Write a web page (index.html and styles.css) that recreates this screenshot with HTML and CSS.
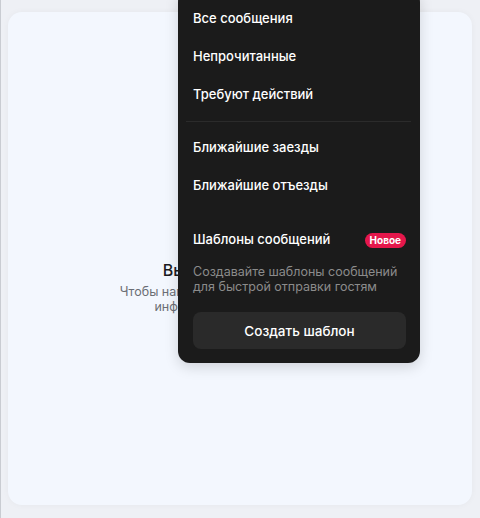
FILE: index.html
```html
<!DOCTYPE html>
<html lang="ru">
<head>
    <meta charset="UTF-8">
    <meta name="viewport" content="width=device-width, initial-scale=1.0">
    <title>Сообщения</title>
    <link rel="stylesheet" href="styles.css">
</head>
<body>
    <div class="page">
        <div class="card">
            <div class="empty">
                <h2 class="empty-title">Выберите разговор</h2>
                <p class="empty-text">Чтобы написать гостю или посмотреть<br>информацию о проживании</p>
            </div>
        </div>

        <!-- Выпадающее меню фильтров -->
        <div class="menu">
            <div class="menu-item">Все сообщения</div>
            <div class="menu-item">Непрочитанные</div>
            <div class="menu-item">Требуют действий</div>
            <div class="menu-sep"></div>
            <div class="menu-item">Ближайшие заезды</div>
            <div class="menu-item">Ближайшие отъезды</div>

            <div class="templates">
                <div class="templates-head">
                    <span>Шаблоны сообщений</span>
                    <span class="badge">Новое</span>
                </div>
                <p class="templates-text">Создавайте шаблоны сообщений<br>для быстрой отправки гостям</p>
                <button class="templates-btn">Создать шаблон</button>
            </div>
        </div>
    </div>
</body>
</html>
```

FILE: styles.css
```css
* {
    box-sizing: border-box;
}

html, body {
    height: 100%;
}

body {
    margin: 0;
    font-family: Inter, "Noto Sans", Arial, sans-serif;
    background: #eef0f5;
    border-left: 1px solid #c9ccd2;
}

.page {
    position: relative;
    height: 100%;
    padding: 12px 8px 13px 7px;
}

.card {
    height: 100%;
    background: #f3f7fe;
    border-radius: 14px;
    box-shadow: 0 0 6px rgba(0, 0, 0, 0.04);
    padding-top: 248px;
}

.empty {
    text-align: center;
}

.empty-title {
    margin: 0 0 4px;
    font-size: 16px;
    font-weight: 500;
    color: #1b1b1f;
    line-height: 20px;
}

.empty-text {
    margin: 0;
    font-size: 12.5px;
    line-height: 15px;
    color: #6b6e75;
}

/* Меню */
.menu {
    position: absolute;
    left: 177px;
    top: -10px;
    width: 242px;
    padding: 9px 14px 14px 15px;
    background: #1b1b1b;
    border-radius: 12px;
    color: #fff;
    box-shadow: 0 4px 14px rgba(0, 0, 0, 0.15);
}

.menu-item {
    height: 38px;
    line-height: 38px;
    font-size: 13px;
    font-weight: 500;
}

.menu-sep {
    height: 1px;
    background: #2b2b2b;
    margin: 8px -5px 6px -7px;
}

.templates {
    margin-top: 26px;
}

.templates-head {
    display: flex;
    justify-content: space-between;
    align-items: center;
    height: 18px;
    font-size: 13px;
    font-weight: 500;
}

.badge {
    background: #e5174b;
    color: #fff;
    font-size: 10px;
    font-weight: 700;
    line-height: 15px;
    height: 15px;
    padding: 0 5px;
    border-radius: 8px;
    margin-top: 2px;
}

.templates-text {
    margin: 16px 0 0;
    font-size: 12.5px;
    line-height: 15px;
    color: #8b8b8b;
}

.templates-btn {
    display: block;
    width: 100%;
    height: 37px;
    margin-top: 18px;
    border: none;
    border-radius: 8px;
    background: #2a2a2a;
    color: #fff;
    font-family: inherit;
    font-size: 13.5px;
    font-weight: 500;
}
```
